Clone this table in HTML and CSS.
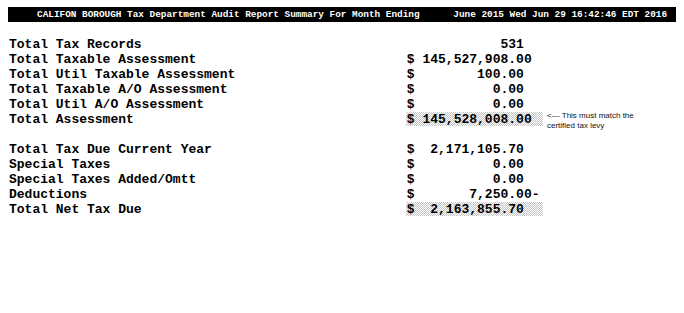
FILE: index.html
```html
<!DOCTYPE html>
<html>
<head>
<meta charset="utf-8">
<link rel="stylesheet" href="styles.css">
</head>
<body>
<div class="titlebar">CALIFON BOROUGH Tax Department Audit Report Summary For Month Ending      June 2015 Wed Jun 29 16:42:46 EDT 2016</div>
<div class="report">
  <div class="row"><span class="label">Total Tax Records</span><span class="val">            531</span></div>
  <div class="row"><span class="label">Total Taxable Assessment</span><span class="val">$ 145,527,908.00</span></div>
  <div class="row"><span class="label">Total Util Taxable Assessment</span><span class="val">$        100.00</span></div>
  <div class="row"><span class="label">Total Taxable A/O Assessment</span><span class="val">$          0.00</span></div>
  <div class="row"><span class="label">Total Util A/O Assessment</span><span class="val">$          0.00</span></div>
  <div class="row"><span class="label">Total Assessment</span><span class="val hl">$ 145,528,008.00</span><span class="note">&lt;--- This must match the<br>certified tax levy</span></div>
  <div class="row blank"></div>
  <div class="row"><span class="label">Total Tax Due Current Year</span><span class="val">$  2,171,105.70</span></div>
  <div class="row"><span class="label">Special Taxes</span><span class="val">$          0.00</span></div>
  <div class="row"><span class="label">Special Taxes Added/Omtt</span><span class="val">$          0.00</span></div>
  <div class="row"><span class="label">Deductions</span><span class="val">$       7,250.00-</span></div>
  <div class="row"><span class="label">Total Net Tax Due</span><span class="val hl">$  2,163,855.70</span></div>
</div>
</body>
</html>
```
FILE: styles.css
```css
html, body {
  margin: 0;
  padding: 0;
  background: #fff;
}
body {
  padding-top: 7px;
}
.titlebar {
  margin: 0 8px;
  height: 15px;
  background: #000;
  color: #fff;
  font-family: "Liberation Mono", "Courier New", monospace;
  font-weight: bold;
  font-size: 9.4px;
  line-height: 15px;
  white-space: pre;
  padding-left: 29px;
  overflow: hidden;
}
.report {
  margin-top: 15px;
  padding-left: 9px;
  font-family: "Liberation Mono", "Courier New", monospace;
  font-weight: bold;
  font-size: 13px;
  line-height: 15px;
  color: #000;
}
.row {
  display: flex;
  height: 15px;
  position: relative;
  white-space: pre;
}
.label {
  width: 51ch;
  flex: none;
}
.val {
  flex: none;
}
.hl {
  display: inline-block;
  width: 137px;
  height: 14px;
  margin-left: -1px;
  padding-left: 1px;
  box-sizing: border-box;
  background-color: #fff;
  background-image: repeating-conic-gradient(#c4c4c4 0 25%, #ffffff 0 50%);
  background-size: 2px 2px;
}
.note {
  position: absolute;
  left: 538px;
  top: -1px;
  font-family: "Liberation Sans", Arial, sans-serif;
  font-weight: normal;
  font-size: 8px;
  line-height: 10px;
  color: #111;
  white-space: nowrap;
}
```
